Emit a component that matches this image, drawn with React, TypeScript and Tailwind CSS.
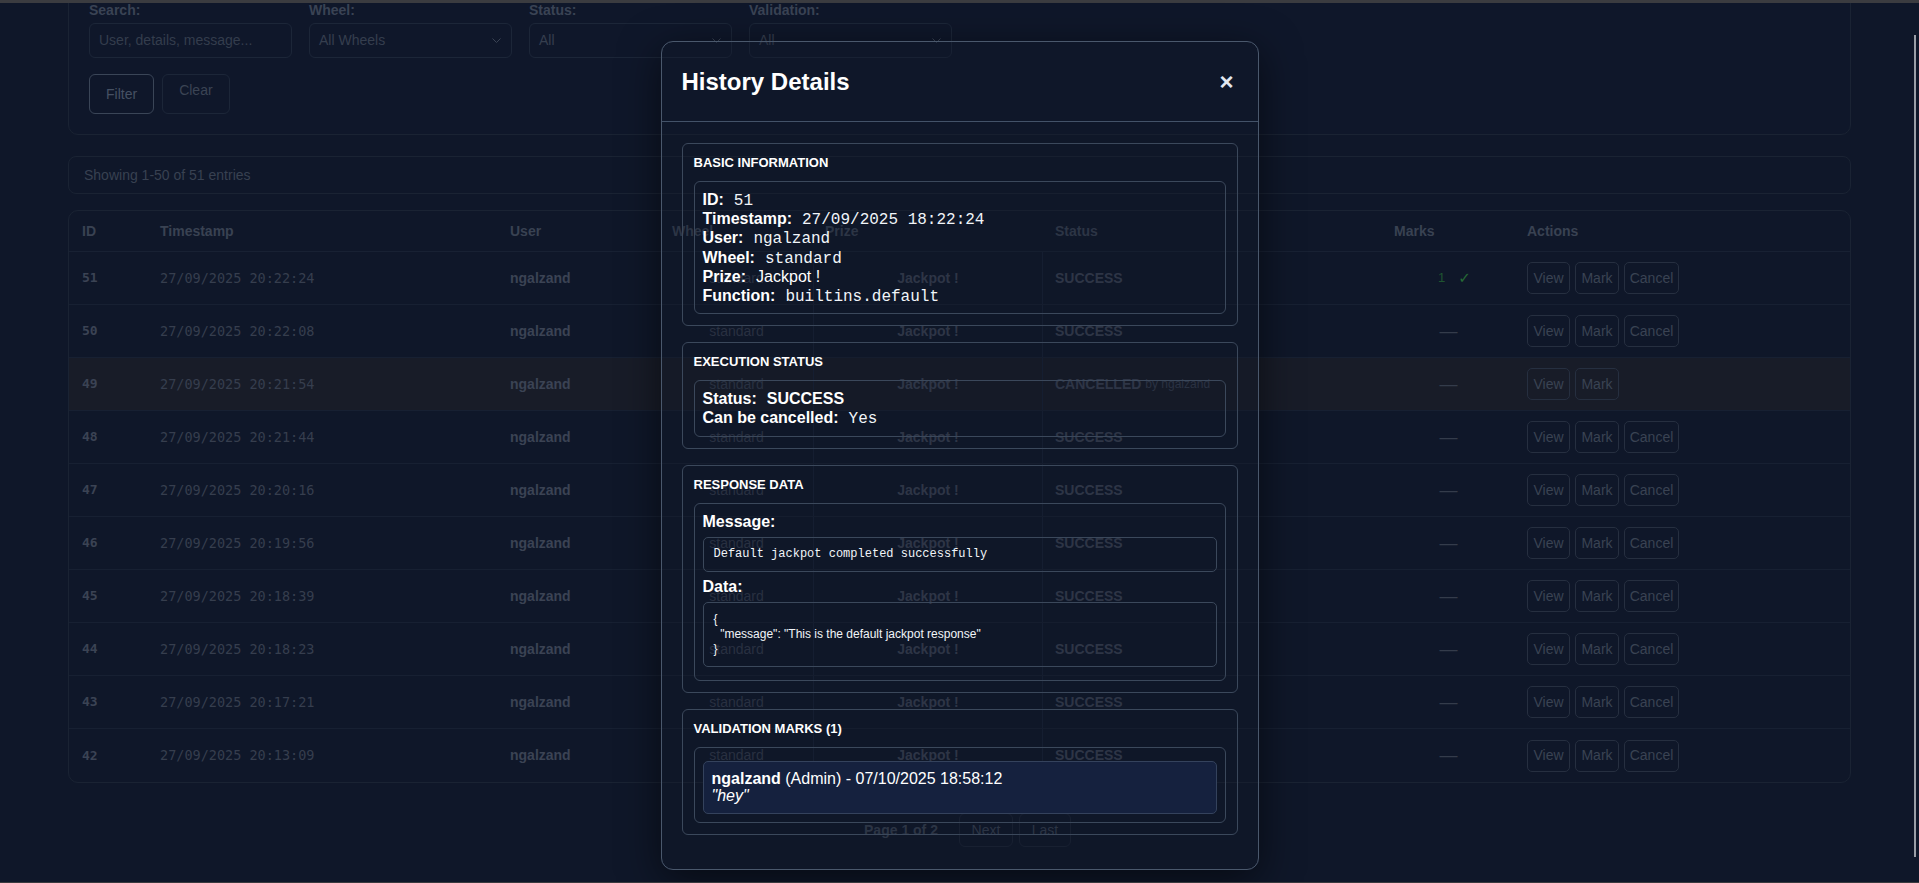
import React from "react";

const rows = [
  { id: "51", ts: "27/09/2025 20:22:24", marks: 1 },
  { id: "50", ts: "27/09/2025 20:22:08" },
  { id: "49", ts: "27/09/2025 20:21:54", cancelled: true },
  { id: "48", ts: "27/09/2025 20:21:44" },
  { id: "47", ts: "27/09/2025 20:20:16" },
  { id: "46", ts: "27/09/2025 20:19:56" },
  { id: "45", ts: "27/09/2025 20:18:39" },
  { id: "44", ts: "27/09/2025 20:18:23" },
  { id: "43", ts: "27/09/2025 20:17:21" },
  { id: "42", ts: "27/09/2025 20:13:09" },
];

function Chevron() {
  return (
    <svg width="9" height="5" viewBox="0 0 9 5" className="shrink-0">
      <path d="M0.5 0.5 L4.5 4.5 L8.5 0.5" stroke="#3a4354" strokeWidth="1" fill="none" />
    </svg>
  );
}

function Field({ label, children }: { label: string; children: React.ReactNode }) {
  return (
    <div className="w-[203px]">
      <div className="text-[14px] font-bold leading-[16px] text-[#3a4354] mb-[5px]">{label}</div>
      {children}
    </div>
  );
}

function SelectBox({ value }: { value: string }) {
  return (
    <div className="h-[35px] rounded-[6px] border border-[#1c2638] flex items-center justify-between pl-[9px] pr-[10px] text-[14px] text-[#353e4e]">
      <span>{value}</span>
      <Chevron />
    </div>
  );
}

function ActionBtn({ label, w }: { label: string; w: string }) {
  return (
    <div className={w + " h-[32px] rounded-[5px] border border-[#262f40] flex items-center justify-center text-[14px] text-[#3a4353] whitespace-nowrap"}>
      {label}
    </div>
  );
}

function Section({ title, children }: { title: string; children: React.ReactNode }) {
  return (
    <div className="rounded-[6px] border border-[#3b485b] px-[11px] pt-[11px] pb-[11px]">
      <div className="text-[13px] font-bold leading-[16px] text-white uppercase mb-[10px]">{title}</div>
      <div className="rounded-[6px] border border-[#3b485b] px-[8px] py-[8px]">{children}</div>
    </div>
  );
}

function InfoLine({ label, children }: { label: string; children: React.ReactNode }) {
  return (
    <div className="h-[19.2px] flex items-baseline leading-[19.2px] text-[16px] text-white whitespace-nowrap">
      <span className="font-bold mr-[10px] leading-[19.2px]">{label}</span>
      {children}
    </div>
  );
}

const mono = "font-['Liberation_Mono',monospace] text-[16px] leading-[19.2px] text-[#f1f5f9]";

export default function App() {
  return (
    <div className="relative h-[883px] overflow-hidden bg-[#0f1729] font-['Liberation_Sans',Arial,sans-serif] border-b border-[#3a3b3f]">
      <div className="px-[68px]">
        {/* Filter card */}
        <div className="-mt-[18px] rounded-[10px] border border-[#1a2333] bg-[#0f172a] px-[20px] pt-[19px] pb-[20px]">
          <div className="flex gap-[17px]">
            <Field label="Search:">
              <div className="h-[35px] rounded-[6px] border border-[#1c2638] flex items-center pl-[9px] text-[14px] text-[#343d4d]">
                User, details, message...
              </div>
            </Field>
            <Field label="Wheel:">
              <SelectBox value="All Wheels" />
            </Field>
            <Field label="Status:">
              <SelectBox value="All" />
            </Field>
            <Field label="Validation:">
              <SelectBox value="All" />
            </Field>
          </div>
          <div className="flex gap-[8px] mt-[16px]">
            <div className="h-[40px] px-[16px] rounded-[6px] border border-[#3a4557] flex items-center text-[14px] text-[#465163]">
              Filter
            </div>
            <div className="h-[40px] px-[16px] pb-[8px] rounded-[6px] border border-[#1c2638] flex items-center text-[14px] text-[#3b4454]">
              Clear
            </div>
          </div>
        </div>

        {/* Showing */}
        <div className="mt-[21px] h-[38px] rounded-[8px] border border-[#1a2333] flex items-center px-[15px] text-[14px] text-[#384151]">
          Showing 1-50 of 51 entries
        </div>

        {/* Table */}
        <div className="mt-[16px] rounded-[10px] border border-[#1a2333] overflow-hidden">
          <div className="grid grid-cols-[79px_350px_162px_153px_230px_339px_133px_335px] h-[41px] border-b border-[#182133] text-[14px] font-bold text-[#394252]">
            <div className="px-[13px] flex items-center">ID</div>
            <div className="px-[12px] flex items-center">Timestamp</div>
            <div className="px-[12px] flex items-center">User</div>
            <div className="px-[12px] flex items-center">Wheel</div>
            <div className="px-[12px] flex items-center">Prize</div>
            <div className="px-[12px] flex items-center">Status</div>
            <div className="px-[12px] flex items-center">Marks</div>
            <div className="px-[12px] flex items-center">Actions</div>
          </div>
          {rows.map((r, i) => (
            <div
              key={r.id}
              className={
                "grid grid-cols-[79px_350px_162px_153px_230px_339px_133px_335px] h-[53px] text-[14px] " +
                (i < rows.length - 1 ? "border-b border-[#172032] " : "") +
                (r.cancelled ? "bg-[#181c28]" : "")
              }
            >
              <div className="px-[13px] flex items-center font-['DejaVu_Sans_Mono',monospace] text-[13px] font-bold text-[#3b4354]">
                {r.id}
              </div>
              <div className="px-[12px] flex items-center font-['DejaVu_Sans_Mono',monospace] text-[13.5px] text-[#363e4e]">
                {r.ts}
              </div>
              <div className="px-[12px] flex items-center font-bold text-[#3b4354]">ngalzand</div>
              <div className="px-[12px] flex items-center justify-center text-[#343c4c]">standard</div>
              <div className="px-[12px] flex items-center justify-center font-bold text-[#3b4354] border-x border-[#182236]">
                Jackpot !
              </div>
              <div className="px-[12px] flex items-center font-bold text-[#3b4354] whitespace-nowrap">
                {r.cancelled ? (
                  <>
                    CANCELLED<span className="font-normal text-[12px] ml-[4px] text-[#363e4e]">by ngalzand</span>
                  </>
                ) : (
                  "SUCCESS"
                )}
              </div>
              <div className="px-[12px] flex items-center justify-center">
                {r.marks ? (
                  <div className="flex items-center pl-[12px]">
                    <span className="text-[13px] text-[#1f5530]">1</span>
                    <span className="ml-[13px] text-[15px] text-[#266a36] font-['DejaVu_Sans',sans-serif]">✓</span>
                  </div>
                ) : (
                  <span className="text-[18px] text-[#343c4b]">—</span>
                )}
              </div>
              <div className="px-[12px] flex items-center gap-[5px]">
                <ActionBtn label="View" w="w-[43px]" />
                <ActionBtn label="Mark" w="w-[44px]" />
                {!r.cancelled && <ActionBtn label="Cancel" w="w-[55px]" />}
              </div>
            </div>
          ))}
        </div>

        {/* Pagination */}
        <div className="mt-[30px] flex justify-center items-center gap-[6px] pl-[16px]">
          <span className="text-[14px] font-bold text-[#394252] mr-[15px]">Page 1 of 2</span>
          <div className="h-[34px] w-[54px] rounded-[6px] border border-[#1c2536] flex items-center justify-center text-[14px] text-[#394252]">
            Next
          </div>
          <div className="h-[34px] w-[52px] rounded-[6px] border border-[#1c2536] flex items-center justify-center text-[14px] text-[#394252]">
            Last
          </div>
        </div>
      </div>

      {/* top chrome line */}
      <div className="absolute top-0 left-0 right-0 h-[3px] bg-[#3b3c40]" />
      {/* scrollbar thumb */}
      <div className="absolute right-[3px] top-[35px] h-[822px] w-[2px] bg-[#9a9ea6]" />

      {/* Modal overlay */}
      <div className="absolute inset-0 flex justify-center items-start">
        <div className="mt-[41px] w-[598px] rounded-[12px] border border-[#4a586c] bg-[#101829]/30 shadow-[0_10px_40px_rgba(0,0,0,0.55)]">
          <div className="h-[80px] border-b border-[#435268] flex items-center justify-between pl-[20px] pr-[24px]">
            <div className="text-[24px] font-bold text-white">History Details</div>
            <div className="text-[24px] font-bold text-[#e2e8f0] leading-none">×</div>
          </div>
          <div className="px-[20px] pt-[21px] pb-[34px] flex flex-col gap-[16px]">
            <Section title="Basic Information">
              <InfoLine label="ID:">
                <span className={mono}>51</span>
              </InfoLine>
              <InfoLine label="Timestamp:">
                <span className={mono}>27/09/2025 18:22:24</span>
              </InfoLine>
              <InfoLine label="User:">
                <span className={mono}>ngalzand</span>
              </InfoLine>
              <InfoLine label="Wheel:">
                <span className={mono}>standard</span>
              </InfoLine>
              <InfoLine label="Prize:">
                <span>Jackpot !</span>
              </InfoLine>
              <InfoLine label="Function:">
                <span className={mono}>builtins.default</span>
              </InfoLine>
            </Section>
            <Section title="Execution Status">
              <InfoLine label="Status:">
                <span className="font-bold">SUCCESS</span>
              </InfoLine>
              <InfoLine label="Can be cancelled:">
                <span className={mono}>Yes</span>
              </InfoLine>
            </Section>
            <Section title="Response Data">
              <div className="text-[16px] font-bold text-white leading-[19.2px] mb-[6px]">Message:</div>
              <div className="rounded-[5px] border border-[#3b485b] px-[10px] py-[9px] mb-[5px] font-['Liberation_Mono',monospace] text-[12px] leading-[15px] text-[#f1f5f9] whitespace-pre">
                Default jackpot completed successfully
              </div>
              <div className="text-[16px] font-bold text-white leading-[19.2px] mb-[6px]">Data:</div>
              <pre className="rounded-[5px] border border-[#3b485b] px-[10px] py-[9px] mb-[5px] font-['Liberation_Sans',Arial,sans-serif] text-[12px] leading-[15px] text-[#f1f5f9] whitespace-pre">
{`{
  "message": "This is the default jackpot response"
}`}
              </pre>
            </Section>
            <Section title="Validation Marks (1)">
              <div className="mt-[5px] rounded-[5px] border border-[#34425c] bg-[#15213e] px-[8px] py-[8px] text-[16px] text-white">
                <div className="leading-[17.5px]">
                  <span className="font-bold">ngalzand</span> (Admin) - 07/10/2025 18:58:12
                </div>
                <div className="leading-[17.5px] italic">"hey"</div>
              </div>
            </Section>
          </div>
        </div>
      </div>
    </div>
  );
}
